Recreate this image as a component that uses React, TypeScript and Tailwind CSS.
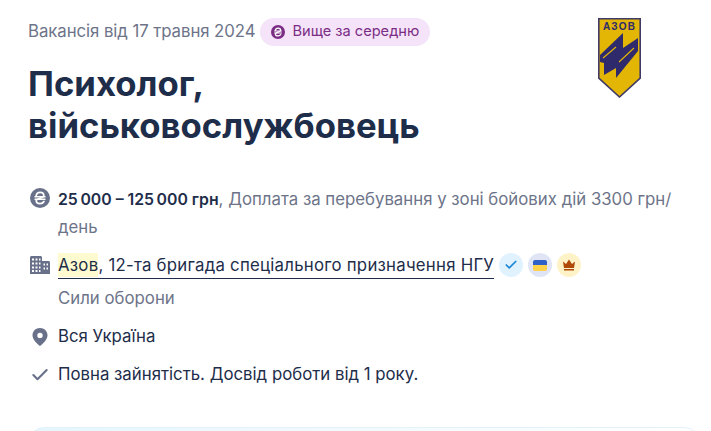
import { Check } from 'lucide-react';

function HryvniaIcon({ className }: { className: string }) {
  return (
    <svg viewBox="0 0 20 20" className={className}>
      <circle cx="10" cy="10" r="10" fill="currentColor" />
      <path d="M6.200 7.600C6.500 5.600 8 4.400 10.100 4.400c2.200 0 3.700 1.300 3.700 3 0 3-7.600 2.600-7.600 5.400 0 1.700 1.600 2.800 3.800 2.800 1.800 0 3.200-.7 3.900-2.100" fill="none" stroke="#fff" strokeWidth="1.700" strokeLinecap="round" />
      <path d="M4.500 8.700h11M4.500 11.300h11" stroke="#fff" strokeWidth="1.500" />
    </svg>
  );
}

function BuildingIcon() {
  return (
    <svg viewBox="0 0 20 18" className="w-[20px] h-[18px] text-[#68708a]" fill="currentColor">
      <path fillRule="evenodd" d="M1.500 0h9c.8 0 1.500.7 1.500 1.500V5h6.500c.8 0 1.500.7 1.500 1.500V18H0V1.500C0 .7.700 0 1.500 0zM2 2.500v2h2v-2H2zm3.500 0v2h2v-2h-2zm3.500 0v2h1.500v-2H9zM2 6.500v2h2v-2H2zm3.500 0v2h2v-2h-2zm3.500 0v2h1.500v-2H9zM2 10.500v2h2v-2H2zm3.500 0v2h2v-2h-2zm3.500 0v2h1.500v-2H9zM2 14v2h2v-2H2zm3.500 0v2h2v-2h-2zm3.500 0v2h1.500v-2H9zM13.500 7.500v2h1.500v-2h-1.500zm3 0v2H18v-2h-1.500zm-3 4v2h1.500v-2h-1.500zm3 0v2H18v-2h-1.500z" />
    </svg>
  );
}

function PinIcon() {
  return (
    <svg viewBox="0 0 16 18" className="w-[16px] h-[18px] text-[#68708a]">
      <path fillRule="evenodd" d="M8 0c4.300 0 7.500 3.200 7.500 7.300 0 4.200-4 8.300-7.500 10.700C4.500 15.600.5 11.500.5 7.300.5 3.200 3.700 0 8 0zm0 4.700a2.700 2.700 0 100 5.400 2.700 2.700 0 000-5.400z" fill="currentColor" />
    </svg>
  );
}

function AzovLogo() {
  return (
    <svg viewBox="0 0 43 80" className="w-[43px] h-[80px]">
      <path d="M.8.8h41.400v59.400L21.500 79 .8 60.200z" fill="#e3b505" stroke="#3f3a66" strokeWidth="1.600" />
      <text x="21.500" y="12.300" textAnchor="middle" fontSize="10" fontWeight="700" fontFamily="'Liberation Sans', sans-serif" fill="#2e2a6b" letterSpacing="1.200">АЗОВ</text>
      <path d="M25 15v15l15-10v13L18 60V50L6 57V45L2 44v-7z" fill="#2e2a6b" />
      <path d="M5 40L18 29M21 44L36 30" fill="none" stroke="#e3b505" strokeWidth="1.100" />
    </svg>
  );
}

export default function App() {
  return (
    <div className="h-[431px] overflow-hidden bg-white font-['Inter',sans-serif] text-[16.8px] text-[#1e2d4a] pt-[18px] pl-[28px] pr-[11px]">
      <div className="flex justify-between">
        <div>
          <div className="flex items-center gap-[5px] h-[28px]">
            <span className="text-[#6d7489] tracking-[-0.07px]">Вакансія від 17 травня 2024</span>
            <span className="flex items-center gap-[7px] h-[28px] pl-[11px] pr-[11px] rounded-full bg-[#f5e3f9] text-[14.6px] text-[#7b2d85]">
              <HryvniaIcon className="w-[14px] h-[14px] text-[#7b2d85]" />
              Вище за середню
            </span>
          </div>
          <h1 className="mt-[16px] text-[34.7px] leading-[42px] font-bold">
            Психолог,
            <br />
            військовослужбовець
          </h1>
        </div>
        <div className="mr-[59px]">
          <AzovLogo />
        </div>
      </div>

      <div className="mt-[39px] flex flex-col pl-[2px]">
        <div className="flex gap-[8px]">
          <HryvniaIcon className="w-[20px] h-[20px] mt-[3px] shrink-0 text-[#68708a]" />
          <p className="leading-[28px] text-[#6d7489] max-w-[620px]">
            <span className="font-semibold text-[15.8px] leading-none text-[#1e2d4a]">25{'\u202f'}000 – 125{'\u202f'}000 грн</span>, Доплата за перебування у зоні бойових дій 3300 грн/<wbr />день
          </p>
        </div>
        <div className="flex gap-[8px] mt-[10px] items-start">
          <div className="mt-[5px]">
            <BuildingIcon />
          </div>
          <div>
            <div className="flex items-center h-[28px]">
              <a className="border-b border-[#1e2d4a] leading-[26px] tracking-[0.24px]">
                <span className="bg-[#fdfbcf] py-[2px]">Азов</span>, 12-та бригада спеціального призначення НГУ
              </a>
              <div className="flex gap-[5px] ml-[5px]">
                <span className="w-[24px] h-[24px] rounded-full bg-[#e0f2fe] flex items-center justify-center">
                  <Check className="w-[14px] h-[14px] text-[#1e88d6]" strokeWidth={3} />
                </span>
                <span className="w-[24px] h-[24px] rounded-full bg-[#dfe5f5] flex items-center justify-center">
                  <span className="w-[14px] h-[11px] rounded-[2px] overflow-hidden flex flex-col">
                    <span className="flex-1 bg-[#2f62c9]" />
                    <span className="flex-1 bg-[#fcd34d]" />
                  </span>
                </span>
                <span className="w-[24px] h-[24px] rounded-full bg-[#fef3c7] flex items-center justify-center">
                  <svg viewBox="0 0 14 12" className="w-[14px] h-[12px]">
                    <path d="M1 2.500l3 2.500L7 .5l3 4.500 3-2.500-1 6.500H2zM2 10h10v1.500H2z" fill="#b04a08" />
                  </svg>
                </span>
              </div>
            </div>
            <p className="text-[#6d7489] leading-[28px] mt-[5px]">Сили оборони</p>
          </div>
        </div>
        <div className="flex gap-[10px] mt-[11px] items-center h-[28px] pl-[2px]">
          <PinIcon />
          <span>Вся Україна</span>
        </div>
        <div className="flex gap-[8px] mt-[10px] items-center h-[28px]">
          <Check className="w-[20px] h-[20px] text-[#68708a]" strokeWidth={2.500} />
          <span>Повна зайнятість. Досвід роботи від 1 року.</span>
        </div>
      </div>
      <div className="mt-[38px] h-[60px] rounded-[16px] border border-[#e3f1fb] bg-gradient-to-r from-[#e6f6fe] to-white" />
    </div>
  );
}
